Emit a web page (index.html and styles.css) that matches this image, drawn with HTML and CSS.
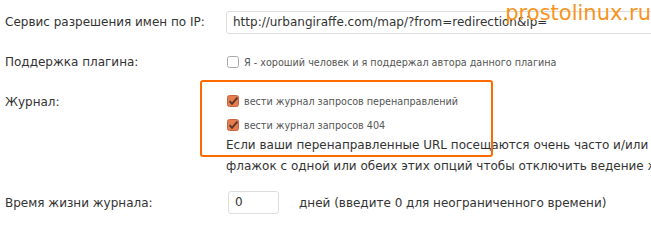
FILE: index.html
```html
<!DOCTYPE html>
<html lang="ru">
<head>
<meta charset="utf-8">
<link rel="stylesheet" href="styles.css">
</head>
<body>
<div class="form">
  <div class="row row-ip">
    <div class="label">Сервис разрешения имен по IP:</div>
    <div class="value"><div class="input input-wide">http://urbangiraffe.com/map/?from=redirection&amp;ip=</div></div>
  </div>
  <div class="row row-support">
    <div class="label">Поддержка плагина:</div>
    <div class="value">
      <div class="check-line">
        <svg class="cb" width="12" height="12" viewBox="0 0 12 12"><rect x="0.5" y="0.5" width="11" height="11" rx="2" fill="#fff" stroke="#a8a8a8"/></svg>
        <span class="small">Я - хороший человек и я поддержал автора данного плагина</span>
      </div>
    </div>
  </div>
  <div class="row row-log">
    <div class="label">Журнал:</div>
    <div class="value">
      <div class="check-line">
        <svg class="cb" width="12" height="12" viewBox="0 0 12 12"><rect x="0.5" y="0.5" width="11" height="11" rx="2" fill="#e57c50" stroke="#c8673f"/><path d="M2.6 6.2 L5 8.8 L10.4 2.6" fill="none" stroke="#5a3326" stroke-width="1.8"/></svg>
        <span class="small">вести журнал запросов перенаправлений</span>
      </div>
      <div class="check-line">
        <svg class="cb" width="12" height="12" viewBox="0 0 12 12"><rect x="0.5" y="0.5" width="11" height="11" rx="2" fill="#e57c50" stroke="#c8673f"/><path d="M2.6 6.2 L5 8.8 L10.4 2.6" fill="none" stroke="#5a3326" stroke-width="1.8"/></svg>
        <span class="small">вести журнал запросов 404</span>
      </div>
      <p class="desc">Если ваши перенаправленные URL посещаются очень часто и/или вы не хотите вести журнал, снимите<br>флажок с одной или обеих этих опций чтобы отключить ведение журнала.</p>
    </div>
  </div>
  <div class="row row-life">
    <div class="label">Время жизни журнала:</div>
    <div class="value inline">
      <div class="input input-num">0</div>
      <span class="unit">дней (введите 0 для неограниченного времени)</span>
    </div>
  </div>
</div>
<div class="highlight"></div>
<div class="watermark">prostolinux.ru</div>
</body>
</html>
```
FILE: styles.css
```css
html, body {
  margin: 0;
  padding: 0;
  background: #fff;
  overflow: hidden;
}
body {
  width: 651px;
  height: 226px;
  position: relative;
  font-family: "DejaVu Sans", sans-serif;
  font-size: 12px;
  color: #333;
}
.form {
  padding-left: 5px;
}
.row {
  display: grid;
  grid-template-columns: 221px 1fr;
}
.label {
  white-space: nowrap;
  line-height: 16px;
}
.value {
  min-width: 0;
  overflow: hidden;
}
.row-ip {
  padding-top: 11px;
  height: 45px;
  box-sizing: border-box;
}
.row-ip .label {
  padding-top: 3px;
}
.input {
  box-sizing: border-box;
  border: 1px solid #ddd;
  border-radius: 3px;
  height: 23px;
  line-height: 21px;
  padding: 0 6px;
  white-space: nowrap;
  background: #fff;
}
.input-wide {
  width: 460px;
}
.row-support {
  padding-top: 9px;
  height: 38px;
  box-sizing: border-box;
}
.check-line {
  display: flex;
  align-items: center;
  gap: 5px;
  height: 16px;
  padding-left: 1px;
}
.cb {
  flex: none;
}
.small {
  font-family: "DejaVu Sans Condensed", "DejaVu Sans", sans-serif;
  font-size: 10.7px;
  color: #555;
  white-space: nowrap;
}
.row-log {
  padding-top: 3px;
}
.row-log .label {
  padding-top: 8px;
}
.row-log .check-line {
  margin-top: 7px;
}
.row-log .check-line + .check-line {
  margin-top: 8px;
}
.desc {
  margin: 2px 0 0;
  line-height: 21px;
  white-space: nowrap;
}
.row-life {
  padding-top: 14px;
}
.row-life .label {
  padding-top: 4px;
}
.inline {
  display: flex;
  align-items: center;
  gap: 20px;
  padding-left: 2px;
}
.input-num {
  width: 51px;
}
.unit {
  white-space: nowrap;
}
.highlight {
  position: absolute;
  left: 200px;
  top: 80px;
  width: 293px;
  height: 77px;
  box-sizing: border-box;
  border: 2px solid #ff6a00;
  border-radius: 3px;
}
.watermark {
  position: absolute;
  right: 0;
  top: 0;
  font-family: "DejaVu Sans", sans-serif;
  font-size: 21px;
  line-height: 26px;
  color: #f7941d;
  white-space: nowrap;
}
```
